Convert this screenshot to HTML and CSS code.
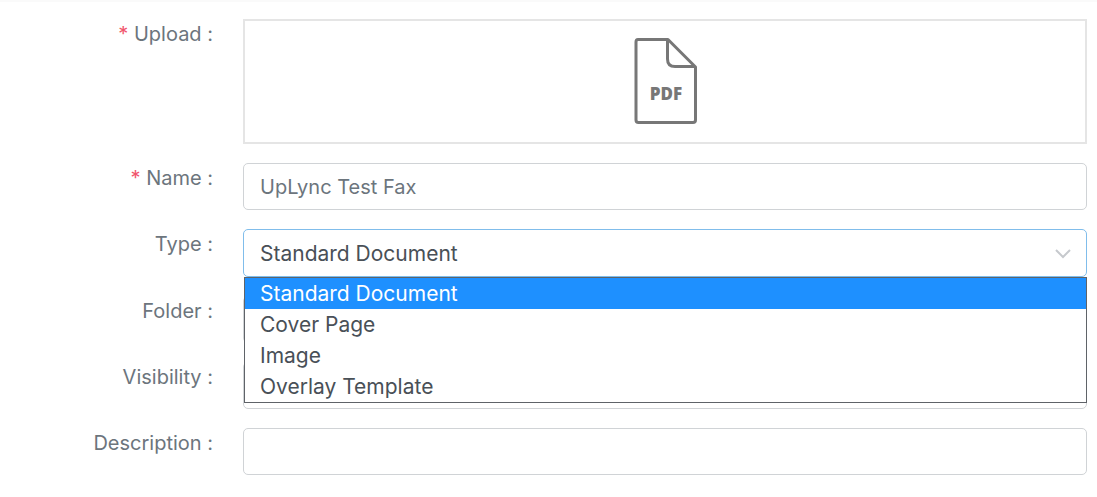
FILE: index.html
```
<!DOCTYPE html>
<html lang="en">
<head>
  <meta charset="UTF-8">
  <meta name="viewport" content="width=device-width, initial-scale=1.0">
  <title>Upload Document</title>
  <link rel="stylesheet" href="styles.css">
</head>
<body>
  <form class="doc-form">
    <div class="form-row">
      <label for="upload"><span class="required">*</span> Upload :</label>
      <button type="button" id="upload" class="upload-box" aria-label="Upload PDF">
        <svg width="64" height="88" viewBox="0 0 64 88" fill="none" stroke="#777" stroke-width="3" stroke-linejoin="round">
          <path d="M5 1.500H35L62.500 29V82Q62.500 84.500 60 84.500H5.500Q3 84.500 3 82V4Q3 1.500 5 1.500Z"/>
          <path d="M34.500 2V21Q34.500 28.500 42 28.500H62"/>
          <text class="pdf-text" x="33" y="62" text-anchor="middle">PDF</text>
        </svg>
      </button>
    </div>

    <div class="form-row">
      <label for="name"><span class="required">*</span> Name :</label>
      <input type="text" id="name" class="field" value="UpLync Test Fax">
    </div>

    <div class="form-row">
      <label for="type">Type :</label>
      <div class="select-wrap">
        <select id="type" class="field type-select">
          <option selected>Standard Document</option>
          <option>Cover Page</option>
          <option>Image</option>
          <option>Overlay Template</option>
        </select>
        <svg class="chevron" width="16" height="10" viewBox="0 0 16 10" fill="none" stroke="#c6c9cd" stroke-width="2">
          <path d="M1 1L8 8L15 1"/>
        </svg>
        <ul class="options" role="listbox" aria-label="Type">
          <li class="active" role="option" aria-selected="true">Standard Document</li>
          <li role="option">Cover Page</li>
          <li role="option">Image</li>
          <li role="option">Overlay Template</li>
        </ul>
      </div>
    </div>

    <div class="form-row">
      <label for="folder">Folder :</label>
      <select id="folder" class="field"></select>
    </div>

    <div class="form-row">
      <label for="visibility">Visibility :</label>
      <select id="visibility" class="field"></select>
    </div>

    <div class="form-row">
      <label for="description">Description :</label>
      <input type="text" id="description" class="field">
    </div>
  </form>
</body>
</html>
```
FILE: styles.css
```
* {
  box-sizing: border-box;
}

body {
  margin: 0;
  font-family: Inter, sans-serif;
  font-size: 20px;
  color: #6c757d;
  background-color: #fff;
  border-top: 2px solid #fafafa;
}

.doc-form {
  display: flex;
  flex-direction: column;
  gap: 19px;
  padding: 17px 10px 20px;
}

.form-row {
  display: grid;
  grid-template-columns: 203px 1fr;
  column-gap: 30px;
  align-items: start;
}

label {
  line-height: 30px;
  text-align: right;
}

.required {
  color: #f1556c;
}

.upload-box {
  display: flex;
  justify-content: center;
  align-items: center;
  width: 100%;
  height: 125px;
  padding: 0;
  background: #fff;
  border: 2px solid #e5e5e5;
}

.pdf-text {
  font: 800 17px "Open Sans", sans-serif;
  fill: #777;
  stroke: none;
}

.field {
  appearance: none;
  width: 100%;
  height: 47px;
  padding: 0 16px;
  font: inherit;
  color: #6c757d;
  background: #fff;
  border: 1px solid #d0d3d6;
  border-radius: 5px;
}

.select-wrap {
  position: relative;
}

/* type dropdown is shown open */
.type-select {
  display: block;
  height: 48px;
  font-size: 21px;
  color: #495057;
  border-color: #80bdeb;
}

.chevron {
  position: absolute;
  top: 20px;
  right: 16px;
  pointer-events: none;
}

.options {
  position: absolute;
  top: 100%;
  left: 1px;
  right: 0;
  z-index: 1;
  margin: 0;
  padding: 0;
  list-style: none;
  font-size: 21px;
  color: #495057;
  background: #fff;
  border: 1px solid #5f6368;
}

.options li {
  padding: 0 15px;
  line-height: 31px;
}

.options .active {
  color: #fff;
  background: #1e90ff;
}
```
